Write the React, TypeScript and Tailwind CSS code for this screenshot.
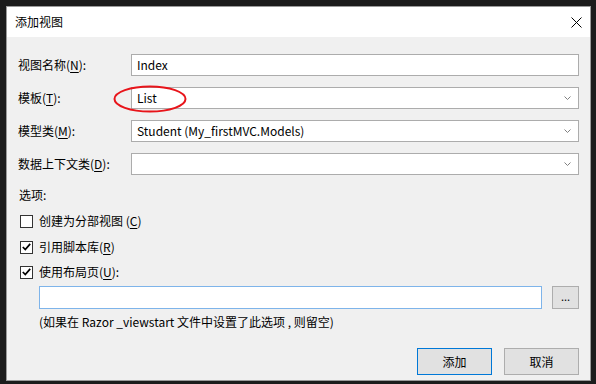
const font = { fontFamily: '"Noto Sans CJK SC", "Noto Sans", sans-serif' };

function Key({ k }: { k: string }) {
  return <span className="underline underline-offset-2">{k}</span>;
}

function Chevron() {
  return (
    <svg width="7" height="4" viewBox="0 0 7 4" className="shrink-0">
      <path d="M0.5 0.5 L3.5 3.5 L6.5 0.5" fill="none" stroke="#808080" strokeWidth="1" />
    </svg>
  );
}

function Field({ value, select }: { value?: string; select?: boolean }) {
  return (
    <div className="flex-1 h-[22px] bg-white border border-[#acacac] flex items-center pl-[5px] pr-[7px]">
      <span className="flex-1 leading-none">{value}</span>
      {select && <Chevron />}
    </div>
  );
}

function Row({ label, children }: { label: React.ReactNode; children: React.ReactNode }) {
  return (
    <div className="flex items-center h-[22px]">
      <div className="w-[113px] shrink-0">{label}</div>
      {children}
    </div>
  );
}

function Check({ checked, children }: { checked?: boolean; children: React.ReactNode }) {
  return (
    <div className="flex items-center h-[16px] pl-[2px] gap-[6px]">
      <div className="w-[13px] h-[13px] bg-white border border-[#333] flex items-center justify-center">
        {checked && (
          <svg width="9" height="8" viewBox="0 0 9 8">
            <path d="M0.8 4 L3.3 6.6 L8.2 0.9" fill="none" stroke="#000" strokeWidth="1.7" />
          </svg>
        )}
      </div>
      <span>{children}</span>
    </div>
  );
}

export default function App() {
  return (
    <div className="w-[596px] h-[384px] bg-[#1c1c1c] pt-[6px] pl-[6px] text-[12px] text-black" style={font}>
      <div className="w-[585px] h-[375px] border border-[#9a9a9a] bg-[#f0f0f0] flex flex-col">
        <div className="h-[30px] bg-white flex items-center pl-[8px] pr-[8px]">
          <span className="flex-1">添加视图</span>
          <svg width="11" height="11" viewBox="0 0 11 11">
            <path d="M0.5 0.5 L10.5 10.5 M10.5 0.5 L0.5 10.5" stroke="#000" strokeWidth="1" />
          </svg>
        </div>
        <div className="flex flex-col pt-[17px] pl-[11px] pr-[11px]">
          <Row label={<>视图名称(<Key k="N" />):</>}>
            <Field value="Index" />
          </Row>
          <div className="mt-[11px]">
            <Row label={<>模板(<Key k="T" />):</>}>
              <div className="relative flex-1 flex">
                <Field value="List" select />
                <svg width="76" height="28" viewBox="0 0 76 28" className="absolute left-[-18px] top-[-2px]">
                  <ellipse cx="37" cy="14" rx="35.5" ry="12.5" fill="none" stroke="#e8141a" strokeWidth="2" />
                </svg>
              </div>
            </Row>
          </div>
          <div className="mt-[11px]">
            <Row label={<>模型类(<Key k="M" />):</>}>
              <Field value="Student (My_firstMVC.Models)" select />
            </Row>
          </div>
          <div className="mt-[11px]">
            <Row label={<>数据上下文类(<Key k="D" />):</>}>
              <Field select />
            </Row>
          </div>
          <div className="mt-[12px] h-[16px] flex items-center pl-[1px]">选项:</div>
          <div className="mt-[10px]">
            <Check>
              创建为分部视图 (<Key k="C" />)
            </Check>
          </div>
          <div className="mt-[10px]">
            <Check checked>
              引用脚本库(<Key k="R" />)
            </Check>
          </div>
          <div className="mt-[9px]">
            <Check checked>
              使用布局页(<Key k="U" />):
            </Check>
          </div>
          <div className="mt-[6px] pl-[21px] flex gap-[10px]">
            <div className="flex-1 h-[23px] bg-white border border-[#7eb4ea]" />
            <button className="w-[27px] h-[23px] bg-[#e1e1e1] border border-[#adadad] flex items-center justify-center text-[11px] leading-none pb-[3px]">
              ...
            </button>
          </div>
          <div className="mt-[5px] pl-[21px] h-[16px] flex items-center">
            (如果在 Razor _viewstart 文件中设置了此选项 , 则留空)
          </div>
          <div className="mt-[18px] flex justify-end gap-[12px]">
            <button className="w-[75px] h-[27px] bg-[#e1e1e1] border border-[#0078d7]">添加</button>
            <button className="w-[75px] h-[27px] bg-[#e1e1e1] border border-[#adadad]">取消</button>
          </div>
        </div>
      </div>
    </div>
  );
}
